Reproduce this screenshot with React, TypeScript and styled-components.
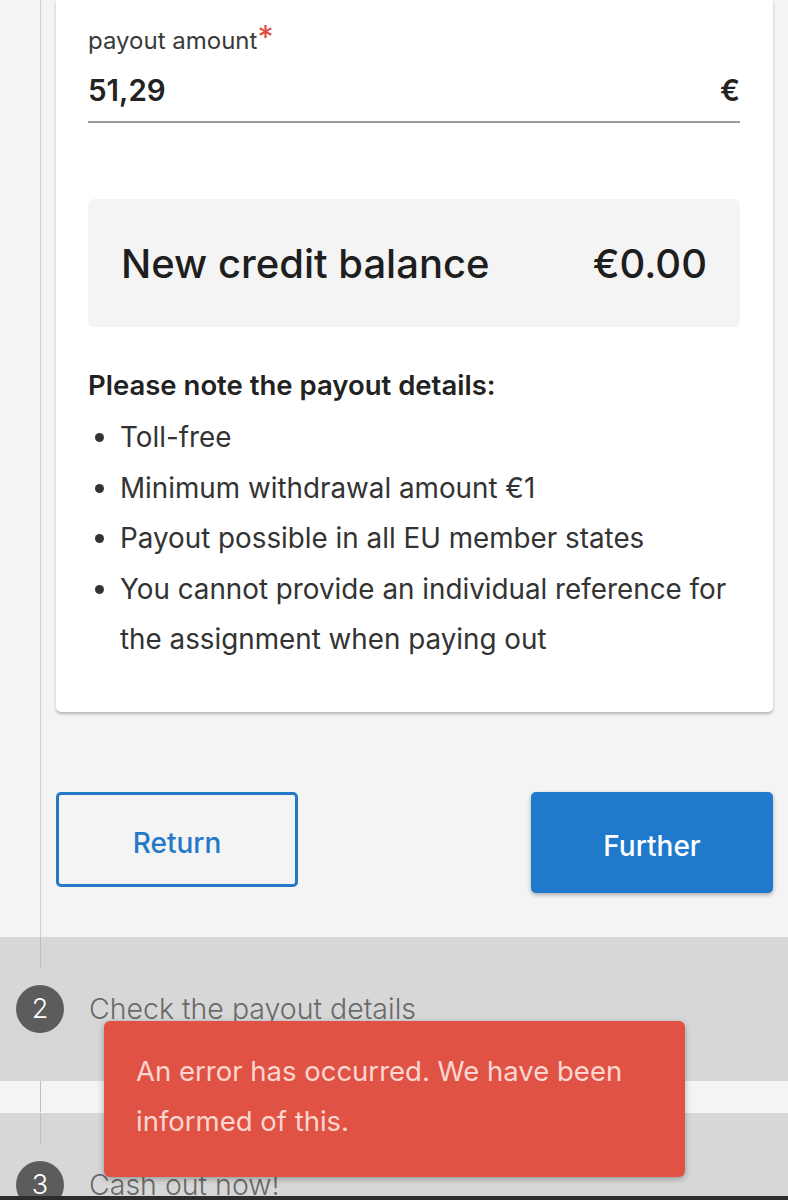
import React from "react";
import styled, { createGlobalStyle } from "styled-components";

const GlobalStyle = createGlobalStyle`
  html, body {
    margin: 0;
    padding: 0;
    background: #f4f4f4;
    font-family: Inter, "Open Sans", sans-serif;
    color: #2b2b2b;
  }
  * {
    box-sizing: border-box;
  }
`;

const notes = [
  "Toll-free",
  "Minimum withdrawal amount €1",
  "Payout possible in all EU member states",
  "You cannot provide an individual reference for the assignment when paying out",
];

const steps = [
  { num: 2, title: "Check the payout details" },
  { num: 3, title: "Cash out now!" },
];

const App = () => {
  return (
    <>
      <GlobalStyle />
      <Page>
        <Main>
          <StepBody>
            <Card>
              <FieldLabel>
                payout amount<Required>*</Required>
              </FieldLabel>
              <AmountRow>
                <span>51,29</span>
                <span>€</span>
              </AmountRow>
              <BalanceBox>
                <span>New credit balance</span>
                <span>€0.00</span>
              </BalanceBox>
              <NoteTitle>Please note the payout details:</NoteTitle>
              <NoteList>
                {notes.map((n) => (
                  <li key={n}>{n}</li>
                ))}
              </NoteList>
            </Card>
            <ActionWrapper>
              <ReturnButton>Return</ReturnButton>
              <FurtherButton>Further</FurtherButton>
            </ActionWrapper>
          </StepBody>
          {steps.map((s, i) => (
            <React.Fragment key={s.num}>
              {i > 0 ? (
                <StepGap>
                  <Rail />
                </StepGap>
              ) : null}
              <StepHeader>
                <Rail />
                <StepRow>
                  <StepNumber>{s.num}</StepNumber>
                  <StepTitle>{s.title}</StepTitle>
                </StepRow>
              </StepHeader>
            </React.Fragment>
          ))}
          <Toast>An error has occurred. We have been informed of this.</Toast>
        </Main>
        <BottomBar />
      </Page>
    </>
  );
};

export default App;

const Page = styled.div`
  display: flex;
  flex-direction: column;
  height: 1200px;
  overflow: hidden;
`;

const Main = styled.div`
  flex: 1;
  position: relative;
  overflow: hidden;
`;

const StepBody = styled.div`
  margin-left: 40px;
  border-left: 1px solid #d0d0d0;
  padding: 0 15px 44px 15px;
`;

const Card = styled.div`
  background: #ffffff;
  border-radius: 0 0 5px 5px;
  box-shadow: 0 2px 3px rgba(0, 0, 0, 0.25);
  padding: 26px 33px 47px 32px;
`;

const FieldLabel = styled.div`
  font-size: 24px;
  line-height: 29px;
  color: #3a3a3a;
`;

const Required = styled.span`
  color: #e0493b;
  font-size: 32px;
  line-height: 20px;
`;

const AmountRow = styled.div`
  display: flex;
  justify-content: space-between;
  align-items: flex-end;
  height: 68px;
  padding-bottom: 13px;
  border-bottom: 2px solid #9a9a9a;
  font-size: 29.5px;
  line-height: 36px;
  font-weight: 600;
  color: #222;
`;

const BalanceBox = styled.div`
  display: flex;
  justify-content: space-between;
  align-items: center;
  margin-top: 76px;
  height: 128px;
  padding: 0 33px;
  background: #f4f4f4;
  border-radius: 6px;
  font-size: 40px;
  font-weight: 500;
  color: #1e1e1e;
`;

const NoteTitle = styled.div`
  margin-top: 42px;
  font-size: 27.5px;
  line-height: 32px;
  font-weight: 600;
  color: #222;
`;

const NoteList = styled.ul`
  margin: 11px 0 0 0;
  padding-left: 32px;
  font-size: 27.8px;
  color: #333;
  li {
    line-height: 50.6px;
  }
`;

const ActionWrapper = styled.div`
  display: flex;
  justify-content: space-between;
  align-items: flex-start;
  margin-top: 80px;
`;

const Button = styled.button`
  display: flex;
  align-items: center;
  justify-content: center;
  width: 242px;
  padding: 8px 0 0 0;
  border-radius: 5px;
  font-family: Inter, "Open Sans", sans-serif;
  font-size: 28px;
  font-weight: 500;
  cursor: pointer;
`;

const ReturnButton = styled(Button)`
  height: 95px;
  background: transparent;
  border: 3px solid #2479c6;
  color: #2479c6;
`;

const FurtherButton = styled(Button)`
  height: 101px;
  background: #1f7acc;
  border: none;
  color: #ffffff;
  box-shadow: 0 2px 4px rgba(0, 0, 0, 0.3);
`;

const StepHeader = styled.div`
  display: flex;
  flex-direction: column;
  background: #d7d7d7;
  padding-bottom: 48px;
`;

const StepGap = styled.div`
  display: flex;
  flex-direction: column;
  height: 32px;
`;

const Rail = styled.div`
  width: 1px;
  height: 31px;
  flex-shrink: 0;
  margin-left: 40px;
  background: #bdbdbd;
`;

const StepRow = styled.div`
  display: flex;
  align-items: center;
  gap: 25px;
  margin-top: 17px;
  padding-left: 16px;
`;

const StepNumber = styled.div`
  display: flex;
  align-items: center;
  justify-content: center;
  width: 48px;
  height: 48px;
  border-radius: 50%;
  background: #5c5c5c;
  color: #ffffff;
  font-size: 27px;
  font-weight: 300;
`;

const StepTitle = styled.div`
  font-size: 28.5px;
  font-weight: 300;
  color: #6a6a6a;
`;

const Toast = styled.div`
  position: absolute;
  left: 104px;
  top: 1021px;
  width: 581px;
  height: 156px;
  padding: 25px 32px;
  background: #e05244;
  border-radius: 6px;
  box-shadow: 0 2px 6px rgba(0, 0, 0, 0.3);
  color: #fcd6d0;
  font-size: 27.5px;
  line-height: 50px;
`;

const BottomBar = styled.div`
  height: 4px;
  flex-shrink: 0;
  background: #2d2d2d;
`;
